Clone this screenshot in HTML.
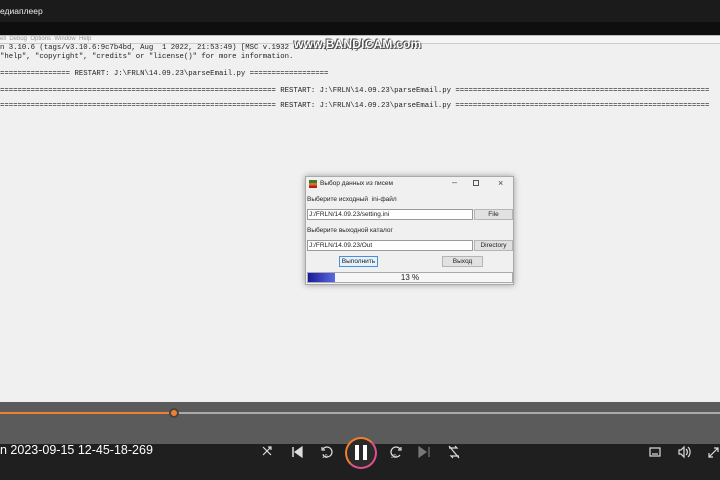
<!DOCTYPE html>
<html><head><meta charset="utf-8"><style>
*{margin:0;padding:0;box-sizing:border-box}
body{width:720px;height:480px;overflow:hidden;background:#f0f0f0;position:relative;font-family:"Liberation Sans","Noto Sans CJK SC",sans-serif}
.abs{position:absolute}
.mono{font-family:"Liberation Mono",monospace;font-size:7.3px;color:#222;white-space:pre;position:absolute;left:0}
.dlg{left:305px;top:176px;width:209px;height:109px;background:#f0f0f0;border:1px solid #aaa;box-shadow:0 0 6px rgba(0,0,0,.35);font-size:6.5px;color:#222}
.fld{position:absolute;background:#fff;border:1px solid #9a9a9a;height:11px;font-size:6.5px;line-height:9px;padding-left:1px}
.btn{position:absolute;background:#e1e1e1;border:1px solid #b5b5b5;height:11px;font-size:6.5px;line-height:9px;text-align:center}
</style></head><body>
<div class="abs" style="left:0;top:0;width:720px;height:22px;background:#1b1b1b"></div>
<div class="abs" style="left:0;top:6px;color:#eee;font-size:8.5px">едиаплеер</div>
<div class="abs" style="left:0;top:22px;width:720px;height:14px;background:#0e0e0e"></div>
<div class="abs" style="left:0;top:35px;width:720px;height:1px;background:#bbb"></div>
<div class="abs" style="left:0;top:36px;width:720px;height:7px;background:#f4f4f4;font-size:6px;color:#999;line-height:7px">ell&nbsp;&nbsp;Debug&nbsp;&nbsp;Options&nbsp;&nbsp;Window&nbsp;&nbsp;Help</div>
<div class="abs" style="left:0;top:43px;width:720px;height:1px;background:#ccc"></div>
<div class="mono" style="top:44px">n 3.10.6 (tags/v3.10.6:9c7b4bd, Aug  1 2022, 21:53:49) [MSC v.1932 64 bit (AMD64)] on win32</div>
<div class="mono" style="top:53px">"help", "copyright", "credits" or "license()" for more information.</div>
<div class="mono" style="top:70px">================ RESTART: J:\FRLN\14.09.23\parseEmail.py ==================</div>
<div class="mono" style="top:87px">=============================================================== RESTART: J:\FRLN\14.09.23\parseEmail.py ==========================================================</div>
<div class="mono" style="top:102px">=============================================================== RESTART: J:\FRLN\14.09.23\parseEmail.py ==========================================================</div>
<div class="abs" style="left:294px;top:37px;font-size:12px;font-weight:bold;color:#fff;text-shadow:0 0 1px #333,1px 1px 0 #555,-1px -1px 0 #555;letter-spacing:.2px">www.BANDICAM.com</div>

<div class="abs dlg">
 <div class="abs" style="left:3px;top:3px;width:8px;height:8px;background:linear-gradient(#3a7a2a 0 35%,#e07020 35% 70%,#b02020 70%)"></div>
 <div class="abs" style="left:14px;top:3px">Выбор данных из писем</div>
 <div class="abs" style="left:146px;top:0;font-size:9px;color:#444">–</div>
 <div class="abs" style="left:167px;top:3px;width:6px;height:6px;border:1px solid #555"></div>
 <div class="abs" style="left:192px;top:1px;font-size:9px;color:#444">×</div>
 <div class="abs" style="left:1px;top:19px">Выберите исходный&nbsp; ini-файл</div>
 <div class="fld" style="left:1px;top:32px;width:166px">J:/FRLN/14.09.23/setting.ini</div>
 <div class="btn" style="left:168px;top:32px;width:39px">File</div>
 <div class="abs" style="left:1px;top:50px">Выберите выходной каталог</div>
 <div class="fld" style="left:1px;top:63px;width:166px">J:/FRLN/14.09.23/Out</div>
 <div class="btn" style="left:168px;top:63px;width:39px">Directory</div>
 <div class="btn" style="left:33px;top:79px;width:39px;border-color:#4a8fd8;background:#e5f1fb">Выполнить</div>
 <div class="btn" style="left:136px;top:79px;width:41px">Выход</div>
 <div class="abs" style="left:1px;top:95px;width:206px;height:11px;background:#f6f6f6;border:1px solid #aaa;text-align:center;font-size:8px;line-height:9px">13 %</div>
 <div class="abs" style="left:2px;top:96px;width:27px;height:9px;background:linear-gradient(90deg,#1a1a9a,#5a6ae0)"></div>
</div>

<div class="abs" style="left:0;top:402px;width:720px;height:42px;background:#5b5b5b"></div>
<div class="abs" style="left:0;top:412px;width:720px;height:2px;background:#aaa"></div>
<div class="abs" style="left:0;top:412px;width:174px;height:2px;background:#f08030"></div>
<div class="abs" style="left:169px;top:408px;width:10px;height:10px;border-radius:50%;background:#f08030;border:2px solid #444"></div>
<div class="abs" style="left:0;top:444px;width:720px;height:36px;background:#1f1f1f"></div>
<div class="abs" style="left:0;top:443px;color:#fff;font-size:12.5px">n 2023-09-15 12-45-18-269</div>
<svg class="abs" style="left:0;top:440px" width="720" height="30" fill="none" stroke="#ddd" stroke-width="1.2">
 <path d="M263 7l8 8M263 15l8-8M268 7h3v3"/>
 <path d="M293 7v10" stroke-width="1.5"/><path d="M302 7v10l-7-5z" fill="#ddd"/>
 <path d="M323 9a5 5 0 1 1 0 6M322 7v3h3"/><text x="322" y="18" font-size="5" fill="#ddd" stroke="none">10</text>
 <path d="M400 9a5 5 0 1 0 0 6M401 7v3h-3"/><text x="391" y="18" font-size="5" fill="#ddd" stroke="none">30</text>
 <path d="M419 7v10l7-5z" fill="#777" stroke="#777"/><path d="M429 7v10" stroke="#777"/>
 <path d="M449 8h8l-2-2M459 16h-8l2 2M449 6l10 12" />
 <rect x="650" y="8" width="10" height="8"/><path d="M652 14h6"/>
 <path d="M679 10h2l3-3v10l-3-3h-2zM686 9a4 4 0 0 1 0 6M688 7a7 7 0 0 1 0 10"/>
 <path d="M709 17l9-9M714 8h4v4M709 13v4h4"/>
</svg>
<div class="abs" style="left:345px;top:437px;width:32px;height:32px;border-radius:50%;border:2.5px solid #e0508a;border-left-color:#f08030;border-top-color:#f08030;background:#2a2a2a"></div>
<div class="abs" style="left:355px;top:445px;width:4px;height:15px;background:#fff"></div>
<div class="abs" style="left:363px;top:445px;width:4px;height:15px;background:#fff"></div>
</body></html>
